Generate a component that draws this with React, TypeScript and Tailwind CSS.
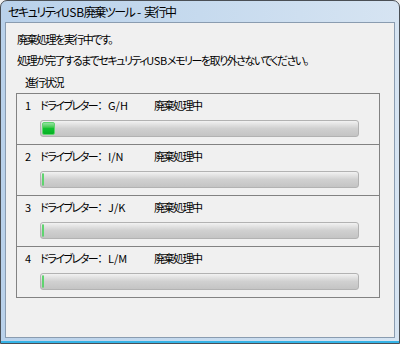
import React from "react";

const rows = [
  { n: "1", drive: "G/H", pct: 13 },
  { n: "2", drive: "I/N", pct: 1 },
  { n: "3", drive: "J/K", pct: 1 },
  { n: "4", drive: "L/M", pct: 1 },
];

function Bar({ fill }: { fill: number }) {
  return (
    <div className="ml-[23px] w-[319px] h-[17px] rounded-[3px] border border-[#b2b2b2] bg-gradient-to-b from-[#f2f2f2] via-[#d0d0d0] to-[#c4c4c4] p-[1px] flex">
      <div
        className="h-full rounded-[2px] bg-gradient-to-b from-[#8fe29e] via-[#0fc12f] to-[#06b025] border border-[#5fd46f]"
        style={{ width: `${fill}px` }}
      />
    </div>
  );
}

export default function App() {
  return (
    <div
      className="w-[400px] h-[344px] bg-[#f0f0f0] whitespace-nowrap [font-feature-settings:'palt']"
      style={{ fontFamily: '"Noto Sans CJK JP", "Noto Sans", sans-serif' }}
    >
      <div className="w-[400px] h-[344px] rounded-t-[7px] border border-[#4a4f55] bg-gradient-to-r from-[#b9d1ea] via-[#c6daee] to-[#d6e4f2] flex flex-col px-[4px] pb-[5px] shadow-[inset_0_-2px_0_#35b3e6]">
        <div className="h-[21px] flex items-center pl-[3px] text-[12px] tracking-[-1.5px] text-black leading-none">
          セキュリティ<span className="tracking-[-0.3px]">USB</span>廃棄ツール<span className="tracking-normal">&nbsp;-&nbsp;</span>実行中
        </div>
        <div className="flex-1 border border-[#8a9cb0] bg-[#f0f0f0] pt-[8px] pl-[10px] text-[11px] tracking-[-1.5px] text-black leading-[17px]">
          <div className="h-[17px] ml-[1px]">廃棄処理を実行中です。</div>
          <div className="h-[17px] mt-[4px] ml-[1px]">
            処理が完了するまでセキュリティ<span className="tracking-[-0.3px]">USB</span>メモリーを取り外さないでください。
          </div>
          <div className="h-[17px] mt-[5px] ml-[9px]">進行状況</div>
          <div className="mt-[2px] w-[364px] border border-[#828282] bg-[#f0f0f0]">
            {rows.map((r, i) => (
              <div
                key={r.n}
                className={i > 0 ? "h-[51px] pt-[3px] border-t border-[#828282]" : "h-[50px] pt-[3px]"}
              >
                <div className="flex h-[17px] items-center">
                  <span className="ml-[8px] w-[15px]">{r.n}</span>
                  <span className="w-[68px]">ドライブレター：</span>
                  <span className="w-[46px] tracking-normal">{r.drive}</span>
                  <span>廃棄処理中</span>
                </div>
                <div className="mt-[6px]">
                  <Bar fill={r.pct} />
                </div>
              </div>
            ))}
          </div>
        </div>
      </div>
    </div>
  );
}
